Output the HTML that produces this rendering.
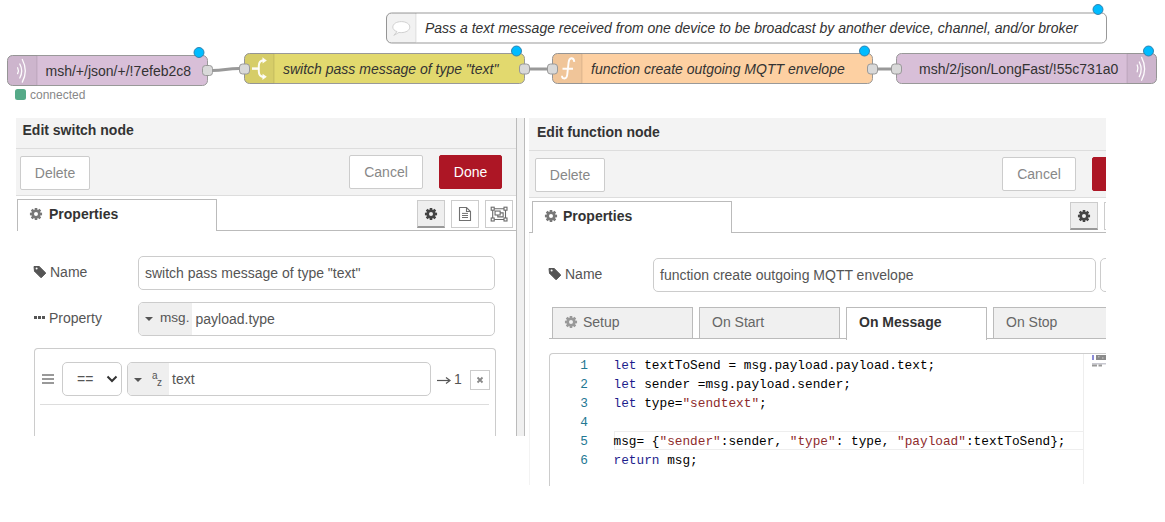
<!DOCTYPE html>
<html><head><meta charset="utf-8">
<style>
*{box-sizing:border-box;margin:0;padding:0}
html,body{width:1165px;height:522px;overflow:hidden;background:#fff;font-family:"Liberation Sans",sans-serif;font-size:14px;color:#555}
.abs{position:absolute}
svg.flow{position:absolute;left:0;top:0}
.hdr{position:absolute;background:#f3f3f3;border-bottom:1px solid #ddd;}
.tb{position:absolute;background:#f3f3f3;border-bottom:1px solid #ddd;}
.btn{position:absolute;background:#fff;border:1px solid #ccc;border-radius:2px;color:#888;font-size:14px;text-align:center;line-height:33px}
.btn.done{background:#ad1625;border-color:#ad1625;color:#fff}
.tab{position:absolute;background:#fff;border:1px solid #bbb;border-bottom:none;color:#555;font-weight:bold;font-size:14px}
.tabline{position:absolute;height:1px;background:#bbb}
.lbl{position:absolute;color:#555;font-size:14px}
.inp{position:absolute;border:1px solid #ccc;border-radius:5px;background:#fff;color:#555;font-size:14px}
.ibtn{position:absolute;border:1px solid #ccc;background:#fff;border-radius:0}
.code{position:absolute;font-family:"Liberation Mono",monospace;font-size:12.77px;white-space:pre;color:#000}
.ln{position:absolute;font-family:"Liberation Mono",monospace;font-size:12.77px;color:#237893;text-align:right}
.kw{color:#1d1d8c}
.str{color:#8e2b2b}
</style></head><body>

<svg class="flow" width="1165" height="110" viewBox="0 0 1165 110">
  <!-- wires -->
  <path d="M212 70.5 C 225 70.5, 226 68.5, 239 68.5" stroke="#999" stroke-width="3" fill="none"/>
  <path d="M530 69 L547 69" stroke="#999" stroke-width="3" fill="none"/>
  <path d="M878 69 L891 69" stroke="#999" stroke-width="3" fill="none"/>

  <!-- comment node -->
  <rect x="386.5" y="13" width="720" height="30" rx="5" fill="#fff" stroke="#999"/>
  <path d="M391.5 13 H416 V43 H391.5 A5 5 0 0 1 386.5 38 V18 A5 5 0 0 1 391.5 13 Z" fill="#000" fill-opacity="0.05"/>
  <line x1="416" y1="13" x2="416" y2="42" stroke="#000" stroke-opacity="0.1"/>
  <path d="M397 31.6 C394.5 30.8, 392.8 29.2, 392.8 27.1 C392.8 23.9, 396.6 21.6, 401.3 21.6 C406 21.6, 409.8 23.9, 409.8 27.1 C409.8 30.3, 406 32.6, 401.3 32.6 C400.5 32.6, 399.8 32.6, 399 32.4 L393.8 35.4 Z" fill="#fff" stroke="#ccc" stroke-width="0.9"/>
  <text x="425" y="33" font-family="Liberation Sans" font-size="14" font-style="italic" fill="#333">Pass a text message received from one device to be broadcast by another device, channel, and/or broker</text>
  <circle cx="1098" cy="9.5" r="5" fill="#00bcff" stroke="#2a7aa8" stroke-width="0.9"/>

  <!-- mqtt in node -->
  <rect x="7.5" y="55.5" width="200" height="30" rx="5" fill="#d8bfd8" stroke="#999"/>
  <path d="M12.5 55.5 H37 V85.5 H12.5 A5 5 0 0 1 7.5 80.5 V60.5 A5 5 0 0 1 12.5 55.5 Z" fill="#000" fill-opacity="0.05"/>
  <line x1="37" y1="56" x2="37" y2="85" stroke="#000" stroke-opacity="0.1"/>
  <g fill="none" stroke="#fff" stroke-width="1.3" stroke-linecap="round" stroke-opacity="0.95">
    <path d="M17.6 67.8 Q19.2 70.7 17.6 73.6"/>
    <path d="M19.8 64 Q23.6 71 19.8 78"/>
    <path d="M22.3 59.5 Q28.3 70.8 22.3 82.1"/>
  </g>
  <text x="45.5" y="75.7" font-family="Liberation Sans" font-size="14" fill="#333">msh/+/json/+/!7efeb2c8</text>
  <rect x="202.5" y="65.5" width="10" height="10" rx="3" fill="#d9d9d9" stroke="#999"/>
  <circle cx="199" cy="52.5" r="5" fill="#00bcff" stroke="#2a7aa8" stroke-width="0.9"/>
  <rect x="15" y="89" width="11" height="11" rx="2.5" fill="#5a8"/>
  <text x="30" y="99" font-family="Liberation Sans" font-size="12" fill="#888">connected</text>

  <!-- switch node -->
  <rect x="244.5" y="53.5" width="280" height="30" rx="5" fill="#e2d96e" stroke="#999"/>
  <path d="M249.5 53.5 H274 V83.5 H249.5 A5 5 0 0 1 244.5 78.5 V58.5 A5 5 0 0 1 249.5 53.5 Z" fill="#000" fill-opacity="0.05"/>
  <line x1="274" y1="54" x2="274" y2="83" stroke="#000" stroke-opacity="0.1"/>
  <g fill="none" stroke="#fff" stroke-width="2" stroke-opacity="0.92">
    <path d="M252 68.6 H258.6" stroke-width="2.5"/>
    <path d="M263.8 60.3 C260.2 60.5, 258.8 62.5, 258.8 66 V71.2 C258.8 74.7, 260.2 76.7, 263.8 76.9"/>
  </g>
  <g fill="#fff" fill-opacity="0.92">
    <path d="M262.4 57.3 L266.8 60.4 L262.6 63.4 Z"/>
    <path d="M262.4 79.9 L266.8 76.8 L262.6 73.8 Z"/>
  </g>
  <text x="283" y="73.7" font-family="Liberation Sans" font-size="14" font-style="italic" fill="#333">switch pass message of type "text"</text>
  <rect x="239.5" y="64" width="10" height="10" rx="3" fill="#d9d9d9" stroke="#999"/>
  <rect x="519.5" y="64" width="10" height="10" rx="3" fill="#d9d9d9" stroke="#999"/>
  <circle cx="516.5" cy="51" r="5" fill="#00bcff" stroke="#2a7aa8" stroke-width="0.9"/>

  <!-- function node -->
  <rect x="552.5" y="53.5" width="320" height="30" rx="5" fill="#fdd0a2" stroke="#999"/>
  <path d="M557.5 53.5 H582 V83.5 H557.5 A5 5 0 0 1 552.5 78.5 V58.5 A5 5 0 0 1 557.5 53.5 Z" fill="#000" fill-opacity="0.05"/>
  <line x1="582" y1="54" x2="582" y2="83" stroke="#000" stroke-opacity="0.1"/>
  <path d="M574.3 61.8 C574 59.2, 572.8 58.2, 571.3 58.3 C569.3 58.5, 568.8 60.5, 568.6 62.5 L567.2 75 C566.9 77.5, 565.5 78.6, 563.8 78.4 C562.7 78.3, 562 77.2, 562 75.8 M562.5 68.8 H573" fill="none" stroke="#fff" stroke-width="1.9" stroke-opacity="0.95"/>
  <text x="591" y="73.7" font-family="Liberation Sans" font-size="14" font-style="italic" fill="#333">function create outgoing MQTT envelope</text>
  <rect x="547.5" y="64" width="10" height="10" rx="3" fill="#d9d9d9" stroke="#999"/>
  <rect x="867.5" y="64" width="10" height="10" rx="3" fill="#d9d9d9" stroke="#999"/>
  <circle cx="864.5" cy="51" r="5" fill="#00bcff" stroke="#2a7aa8" stroke-width="0.9"/>

  <!-- mqtt out node -->
  <rect x="896.5" y="53.5" width="260" height="30" rx="5" fill="#d8bfd8" stroke="#999"/>
  <path d="M1127 53.5 H1151.5 A5 5 0 0 1 1156.5 58.5 V78.5 A5 5 0 0 1 1151.5 83.5 H1127 Z" fill="#000" fill-opacity="0.05"/>
  <line x1="1127" y1="54" x2="1127" y2="83" stroke="#000" stroke-opacity="0.1"/>
  <g fill="none" stroke="#fff" stroke-width="1.3" stroke-linecap="round" stroke-opacity="0.95">
    <path d="M1137.2 65 Q1138.8 68.4 1137.2 71.8"/>
    <path d="M1139.3 62 Q1143.1 69.3 1139.3 76.6"/>
    <path d="M1141.6 57.4 Q1147.6 68.8 1141.6 80.2"/>
  </g>
  <text x="919" y="73.7" font-family="Liberation Sans" font-size="14" fill="#333">msh/2/json/LongFast/!55c731a0</text>
  <rect x="891.5" y="64" width="10" height="10" rx="3" fill="#d9d9d9" stroke="#999"/>
  <circle cx="1148.5" cy="51" r="5" fill="#00bcff" stroke="#2a7aa8" stroke-width="0.9"/>
</svg>

<!-- LEFT TRAY -->
<div class="abs" style="left:0;top:0;width:1165px;height:436px;overflow:hidden">
<div class="abs" style="left:16px;top:118px;width:501px;height:318px;background:#fff"></div>
<div class="hdr" style="left:16px;top:118px;width:501px;height:31px"></div>
<div class="abs" style="left:22.5px;top:122px;font-weight:bold;color:#333;font-size:14px;line-height:17px">Edit switch node</div>
<div class="tb" style="left:16px;top:149px;width:501px;height:47px"></div>
<div class="btn" style="left:20px;top:156px;width:70px;height:34px">Delete</div>
<div class="btn" style="left:349px;top:155px;width:74px;height:34px">Cancel</div>
<div class="btn done" style="left:439px;top:155px;width:63px;height:34px">Done</div>

<div class="tab" style="left:17px;top:199px;width:200px;height:32px"></div>
<svg class="abs" style="left:28px;top:206px" width="16" height="16" viewBox="-8 -8 16 16"><path fill-rule="evenodd" transform="scale(1.0)" d="M-1.43 -4.27 L-1.24 -6.07 L1.24 -6.07 L1.43 -4.27 A4.50 4.50 0 0 1 2.01 -4.03 L3.42 -5.17 L5.17 -3.42 L4.03 -2.01 A4.50 4.50 0 0 1 4.27 -1.43 L6.07 -1.24 L6.07 1.24 L4.27 1.43 A4.50 4.50 0 0 1 4.03 2.01 L5.17 3.42 L3.42 5.17 L2.01 4.03 A4.50 4.50 0 0 1 1.43 4.27 L1.24 6.07 L-1.24 6.07 L-1.43 4.27 A4.50 4.50 0 0 1 -2.01 4.03 L-3.42 5.17 L-5.17 3.42 L-4.03 2.01 A4.50 4.50 0 0 1 -4.27 1.43 L-6.07 1.24 L-6.07 -1.24 L-4.27 -1.43 A4.50 4.50 0 0 1 -4.03 -2.01 L-5.17 -3.42 L-3.42 -5.17 L-2.01 -4.03 A4.50 4.50 0 0 1 -1.43 -4.27 Z M2 0 A2 2 0 1 0 -2 0 A2 2 0 1 0 2 0 Z" fill="#777"/></svg>
<div class="abs" style="left:49px;top:206px;font-weight:bold;color:#333;line-height:16px">Properties</div>
<div class="tabline" style="left:217px;top:230px;width:299px"></div>
<div class="ibtn" style="left:417px;top:200px;width:28px;height:28px;background:#efefef;border-bottom:2px solid #999"></div>
<svg class="abs" style="left:423px;top:206px" width="16" height="16" viewBox="-8 -8 16 16"><path fill-rule="evenodd" transform="scale(1.0)" d="M-1.43 -4.27 L-1.24 -6.07 L1.24 -6.07 L1.43 -4.27 A4.50 4.50 0 0 1 2.01 -4.03 L3.42 -5.17 L5.17 -3.42 L4.03 -2.01 A4.50 4.50 0 0 1 4.27 -1.43 L6.07 -1.24 L6.07 1.24 L4.27 1.43 A4.50 4.50 0 0 1 4.03 2.01 L5.17 3.42 L3.42 5.17 L2.01 4.03 A4.50 4.50 0 0 1 1.43 4.27 L1.24 6.07 L-1.24 6.07 L-1.43 4.27 A4.50 4.50 0 0 1 -2.01 4.03 L-3.42 5.17 L-5.17 3.42 L-4.03 2.01 A4.50 4.50 0 0 1 -4.27 1.43 L-6.07 1.24 L-6.07 -1.24 L-4.27 -1.43 A4.50 4.50 0 0 1 -4.03 -2.01 L-5.17 -3.42 L-3.42 -5.17 L-2.01 -4.03 A4.50 4.50 0 0 1 -1.43 -4.27 Z M2 0 A2 2 0 1 0 -2 0 A2 2 0 1 0 2 0 Z" fill="#444"/></svg>
<div class="ibtn" style="left:451px;top:200px;width:28px;height:28px"></div>
<svg class="abs" style="left:451px;top:200px" width="28" height="28" viewBox="0 0 28 28"><path d="M8.5 7.5 H15.5 L19.5 11.5 V20.5 H8.5 Z M15.5 7.5 V11.5 H19.5" fill="none" stroke="#707070" stroke-width="1.1"/><path d="M11 13.4 H17 M11 15.5 H17 M11 17.5 H17" stroke="#707070" stroke-width="1"/></svg>
<div class="ibtn" style="left:485px;top:200px;width:28px;height:28px"></div>
<svg class="abs" style="left:485px;top:200px" width="28" height="28" viewBox="0 0 28 28"><g fill="none" stroke="#6a6a6a" stroke-width="1.1"><path d="M7.7 10.2 V18 M20.5 10.2 V18 M9.2 8.7 H19 M9.2 19.5 H19"/><rect x="6.2" y="7.2" width="3" height="3"/><rect x="19" y="7.2" width="3" height="3"/><rect x="6.2" y="18" width="3" height="3"/><rect x="19" y="18" width="3" height="3"/><rect x="10.05" y="11.05" width="5.1" height="3.95"/><path d="M15.15 12.85 H18.15 V16.85 H12.8 V15"/></g></svg>

<svg class="abs" style="left:33px;top:265px" width="14" height="14" viewBox="0 0 14 14"><path d="M1 1.5 H6.2 L12.8 8.1 L8.1 12.8 L1.5 6.2 Z" fill="#555" stroke="#555" stroke-linejoin="round"/><circle cx="3.6" cy="3.6" r="1" fill="#fff"/></svg>
<div class="lbl" style="left:50px;top:264px;line-height:16px">Name</div>
<div class="inp" style="left:138px;top:256px;width:357px;height:34px"></div>
<div class="abs" style="left:145px;top:265px;line-height:16px;color:#555">switch pass message of type "text"</div>

<svg class="abs" style="left:33px;top:315px" width="14" height="6" viewBox="0 0 14 6"><rect x="1" y="1" width="3" height="3" fill="#555"/><rect x="5" y="1" width="3" height="3" fill="#555"/><rect x="9" y="1" width="3" height="3" fill="#555"/></svg>
<div class="lbl" style="left:49px;top:310px;line-height:16px">Property</div>
<div class="inp" style="left:138px;top:302px;width:357px;height:34px;overflow:hidden">
  <div class="abs" style="left:0;top:0;width:53px;height:32px;background:#efefef"></div>
</div>
<svg class="abs" style="left:144px;top:316px" width="10" height="6" viewBox="0 0 10 6"><path d="M1 1 H9 L5 5 Z" fill="#555"/></svg>
<div class="abs" style="left:160px;top:310px;line-height:16px;color:#555;font-size:13.6px">msg.</div>
<div class="abs" style="left:195.5px;top:311px;line-height:16px;color:#555">payload.type</div>

<div class="abs" style="left:34px;top:348px;width:462px;height:100px;border:1px solid #ccc;border-radius:4px 4px 0 0;border-bottom:none"></div>
<svg class="abs" style="left:41px;top:373px" width="14" height="12" viewBox="0 0 14 12"><rect x="1" y="1" width="12" height="2" fill="#999"/><rect x="1" y="5" width="12" height="2" fill="#999"/><rect x="1" y="9" width="12" height="2" fill="#999"/></svg>
<div class="inp" style="left:62px;top:362px;width:60px;height:34px"></div>
<div class="abs" style="left:77px;top:371px;line-height:16px;color:#555">==</div>
<svg class="abs" style="left:106px;top:375px" width="12" height="8" viewBox="0 0 12 8"><path d="M1.5 1.5 L6 6 L10.5 1.5" fill="none" stroke="#333" stroke-width="2"/></svg>
<div class="inp" style="left:127px;top:362px;width:304px;height:34px;overflow:hidden">
  <div class="abs" style="left:0;top:0;width:41px;height:32px;background:#efefef"></div>
</div>
<svg class="abs" style="left:133px;top:377px" width="10" height="6" viewBox="0 0 10 6"><path d="M1 1 H9 L5 5 Z" fill="#555"/></svg>
<div class="abs" style="left:152px;top:371px;font-size:10px;line-height:10px;color:#555">a</div>
<div class="abs" style="left:157px;top:378px;font-size:10px;line-height:10px;color:#555">z</div>
<div class="abs" style="left:172px;top:371px;line-height:16px;color:#555">text</div>
<svg class="abs" style="left:436px;top:374px" width="16" height="12" viewBox="0 0 16 12"><path d="M1 6.5 H13" stroke="#555" stroke-width="1.2"/><path d="M10 3.5 L14 6.5 L10 9.5" fill="none" stroke="#555" stroke-width="1.2"/></svg><div class="abs" style="left:454px;top:371px;line-height:16px;color:#555">1</div>
<div class="ibtn" style="left:470px;top:370px;width:20px;height:20px"></div>
<svg class="abs" style="left:470px;top:370px" width="20" height="20" viewBox="0 0 20 20"><path d="M7.5 7.5 L12.5 12.5 M12.5 7.5 L7.5 12.5" stroke="#888" stroke-width="1.8"/></svg>
<div class="abs" style="left:40px;top:404px;width:449px;height:1px;background:#ddd"></div>

</div>
<!-- splitter -->
<div class="abs" style="left:516px;top:118px;width:9px;height:318px;background:#f0f0f0;border-left:1px solid #bbb;border-right:1px solid #bbb"></div>

<!-- RIGHT TRAY -->
<div class="abs" style="left:0;top:0;width:1106px;height:522px;overflow:hidden">
<div class="abs" style="left:529px;top:117px;width:600px;height:370px;background:#fff"></div>
<div class="hdr" style="left:529px;top:118px;width:600px;height:33px"></div>
<div class="abs" style="left:537px;top:124px;font-weight:bold;color:#333;line-height:17px">Edit function node</div>
<div class="tb" style="left:529px;top:151px;width:600px;height:47px"></div>
<div class="btn" style="left:535px;top:158px;width:70px;height:34px">Delete</div>
<div class="btn" style="left:1002px;top:157px;width:74px;height:34px">Cancel</div>
<div class="btn done" style="left:1092px;top:157px;width:63px;height:34px">Done</div>

<div class="tab" style="left:532px;top:201px;width:200px;height:32px"></div>
<svg class="abs" style="left:543px;top:208px" width="16" height="16" viewBox="-8 -8 16 16"><path fill-rule="evenodd" transform="scale(1.0)" d="M-1.43 -4.27 L-1.24 -6.07 L1.24 -6.07 L1.43 -4.27 A4.50 4.50 0 0 1 2.01 -4.03 L3.42 -5.17 L5.17 -3.42 L4.03 -2.01 A4.50 4.50 0 0 1 4.27 -1.43 L6.07 -1.24 L6.07 1.24 L4.27 1.43 A4.50 4.50 0 0 1 4.03 2.01 L5.17 3.42 L3.42 5.17 L2.01 4.03 A4.50 4.50 0 0 1 1.43 4.27 L1.24 6.07 L-1.24 6.07 L-1.43 4.27 A4.50 4.50 0 0 1 -2.01 4.03 L-3.42 5.17 L-5.17 3.42 L-4.03 2.01 A4.50 4.50 0 0 1 -4.27 1.43 L-6.07 1.24 L-6.07 -1.24 L-4.27 -1.43 A4.50 4.50 0 0 1 -4.03 -2.01 L-5.17 -3.42 L-3.42 -5.17 L-2.01 -4.03 A4.50 4.50 0 0 1 -1.43 -4.27 Z M2 0 A2 2 0 1 0 -2 0 A2 2 0 1 0 2 0 Z" fill="#777"/></svg>
<div class="abs" style="left:563px;top:208px;font-weight:bold;color:#333;line-height:16px">Properties</div>
<div class="tabline" style="left:732px;top:232px;width:400px"></div>
<div class="tabline" style="left:529px;top:232px;width:3px"></div>
<div class="abs" style="left:529px;top:233px;width:1px;height:252px;background:#f3f3f3"></div>
<div class="ibtn" style="left:1070px;top:202px;width:28px;height:28px;background:#efefef;border-bottom:2px solid #999"></div>
<svg class="abs" style="left:1076px;top:208px" width="16" height="16" viewBox="-8 -8 16 16"><path fill-rule="evenodd" transform="scale(1.0)" d="M-1.43 -4.27 L-1.24 -6.07 L1.24 -6.07 L1.43 -4.27 A4.50 4.50 0 0 1 2.01 -4.03 L3.42 -5.17 L5.17 -3.42 L4.03 -2.01 A4.50 4.50 0 0 1 4.27 -1.43 L6.07 -1.24 L6.07 1.24 L4.27 1.43 A4.50 4.50 0 0 1 4.03 2.01 L5.17 3.42 L3.42 5.17 L2.01 4.03 A4.50 4.50 0 0 1 1.43 4.27 L1.24 6.07 L-1.24 6.07 L-1.43 4.27 A4.50 4.50 0 0 1 -2.01 4.03 L-3.42 5.17 L-5.17 3.42 L-4.03 2.01 A4.50 4.50 0 0 1 -4.27 1.43 L-6.07 1.24 L-6.07 -1.24 L-4.27 -1.43 A4.50 4.50 0 0 1 -4.03 -2.01 L-5.17 -3.42 L-3.42 -5.17 L-2.01 -4.03 A4.50 4.50 0 0 1 -1.43 -4.27 Z M2 0 A2 2 0 1 0 -2 0 A2 2 0 1 0 2 0 Z" fill="#444"/></svg>
<div class="ibtn" style="left:1104px;top:202px;width:28px;height:28px"></div>

<svg class="abs" style="left:548px;top:267px" width="14" height="14" viewBox="0 0 14 14"><path d="M1 1.5 H6.2 L12.8 8.1 L8.1 12.8 L1.5 6.2 Z" fill="#555" stroke="#555" stroke-linejoin="round"/><circle cx="3.6" cy="3.6" r="1" fill="#fff"/></svg>
<div class="lbl" style="left:565px;top:266px;line-height:16px">Name</div>
<div class="inp" style="left:653px;top:258px;width:443px;height:34px"></div>
<div class="abs" style="left:660px;top:267px;line-height:16px;color:#555">function create outgoing MQTT envelope</div>
<div class="inp" style="left:1100px;top:258px;width:40px;height:34px"></div>

<div class="abs" style="left:552px;top:307px;width:141px;height:32px;background:#f0f0f0;border:1px solid #bbb;border-bottom:none"></div>
<svg class="abs" style="left:563px;top:314px" width="16" height="16" viewBox="-8 -8 16 16"><path fill-rule="evenodd" transform="scale(1.0)" d="M-1.43 -4.27 L-1.24 -6.07 L1.24 -6.07 L1.43 -4.27 A4.50 4.50 0 0 1 2.01 -4.03 L3.42 -5.17 L5.17 -3.42 L4.03 -2.01 A4.50 4.50 0 0 1 4.27 -1.43 L6.07 -1.24 L6.07 1.24 L4.27 1.43 A4.50 4.50 0 0 1 4.03 2.01 L5.17 3.42 L3.42 5.17 L2.01 4.03 A4.50 4.50 0 0 1 1.43 4.27 L1.24 6.07 L-1.24 6.07 L-1.43 4.27 A4.50 4.50 0 0 1 -2.01 4.03 L-3.42 5.17 L-5.17 3.42 L-4.03 2.01 A4.50 4.50 0 0 1 -4.27 1.43 L-6.07 1.24 L-6.07 -1.24 L-4.27 -1.43 A4.50 4.50 0 0 1 -4.03 -2.01 L-5.17 -3.42 L-3.42 -5.17 L-2.01 -4.03 A4.50 4.50 0 0 1 -1.43 -4.27 Z M2 0 A2 2 0 1 0 -2 0 A2 2 0 1 0 2 0 Z" fill="#999"/></svg>
<div class="abs" style="left:583px;top:314px;line-height:16px;color:#666">Setup</div>
<div class="abs" style="left:699px;top:307px;width:141px;height:32px;background:#f0f0f0;border:1px solid #bbb;border-bottom:none"></div>
<div class="abs" style="left:712px;top:314px;line-height:16px;color:#666">On Start</div>
<div class="abs" style="left:846px;top:307px;width:141px;height:33px;background:#fff;border:1px solid #bbb;border-bottom:none"></div>
<div class="abs" style="left:859px;top:314px;line-height:16px;color:#333;font-weight:bold">On Message</div>
<div class="abs" style="left:993px;top:307px;width:141px;height:32px;background:#f0f0f0;border:1px solid #bbb;border-bottom:none"></div>
<div class="abs" style="left:1006px;top:314px;line-height:16px;color:#666">On Stop</div>
<div class="abs" style="left:549px;top:338px;width:297px;height:1px;background:#bbb"></div>
<div class="abs" style="left:987px;top:338px;width:130px;height:1px;background:#bbb"></div>

<div class="abs" style="left:549px;top:353px;width:600px;height:133px;border:1px solid #ccc;border-radius:4px 0 0 0;border-right:none;border-bottom:none"></div>
<div class="abs" style="left:614px;top:431px;width:470px;height:19px;border:1px solid #eee;border-right:none"></div>
<div class="abs" style="left:1083px;top:354px;width:1px;height:130px;background:#eee"></div>
<div class="ln" style="left:560px;top:356px;width:28px;line-height:19px">1<br>2<br>3<br>4<br>5<br>6</div>
<div class="code" style="left:613.5px;top:356px;line-height:19px"><span class="kw">let</span> textToSend = msg.payload.payload.text;
<span class="kw">let</span> sender =msg.payload.sender;
<span class="kw">let</span> type=<span class="str">"sendtext"</span>;

msg= {<span class="str">"sender"</span>:sender, <span class="str">"type"</span>: type, <span class="str">"payload"</span>:textToSend};
<span class="kw">return</span> msg;</div>
<svg class="abs" style="left:1090px;top:354px" width="16" height="14" viewBox="0 0 16 14"><rect x="2" y="1" width="2" height="5" fill="#8c8cd8"/><rect x="6" y="1" width="10" height="5" fill="#8a8a8a"/><rect x="8" y="2.3" width="1.5" height="1" fill="#ccc"/><rect x="12" y="3.5" width="1.5" height="1" fill="#ccc"/><rect x="2" y="9" width="14" height="1.5" fill="#c8c8d0"/><rect x="2" y="10.5" width="5" height="2" fill="#999"/><rect x="8.5" y="10.5" width="3.5" height="2" fill="#999"/></svg>
</div>
</body></html>
